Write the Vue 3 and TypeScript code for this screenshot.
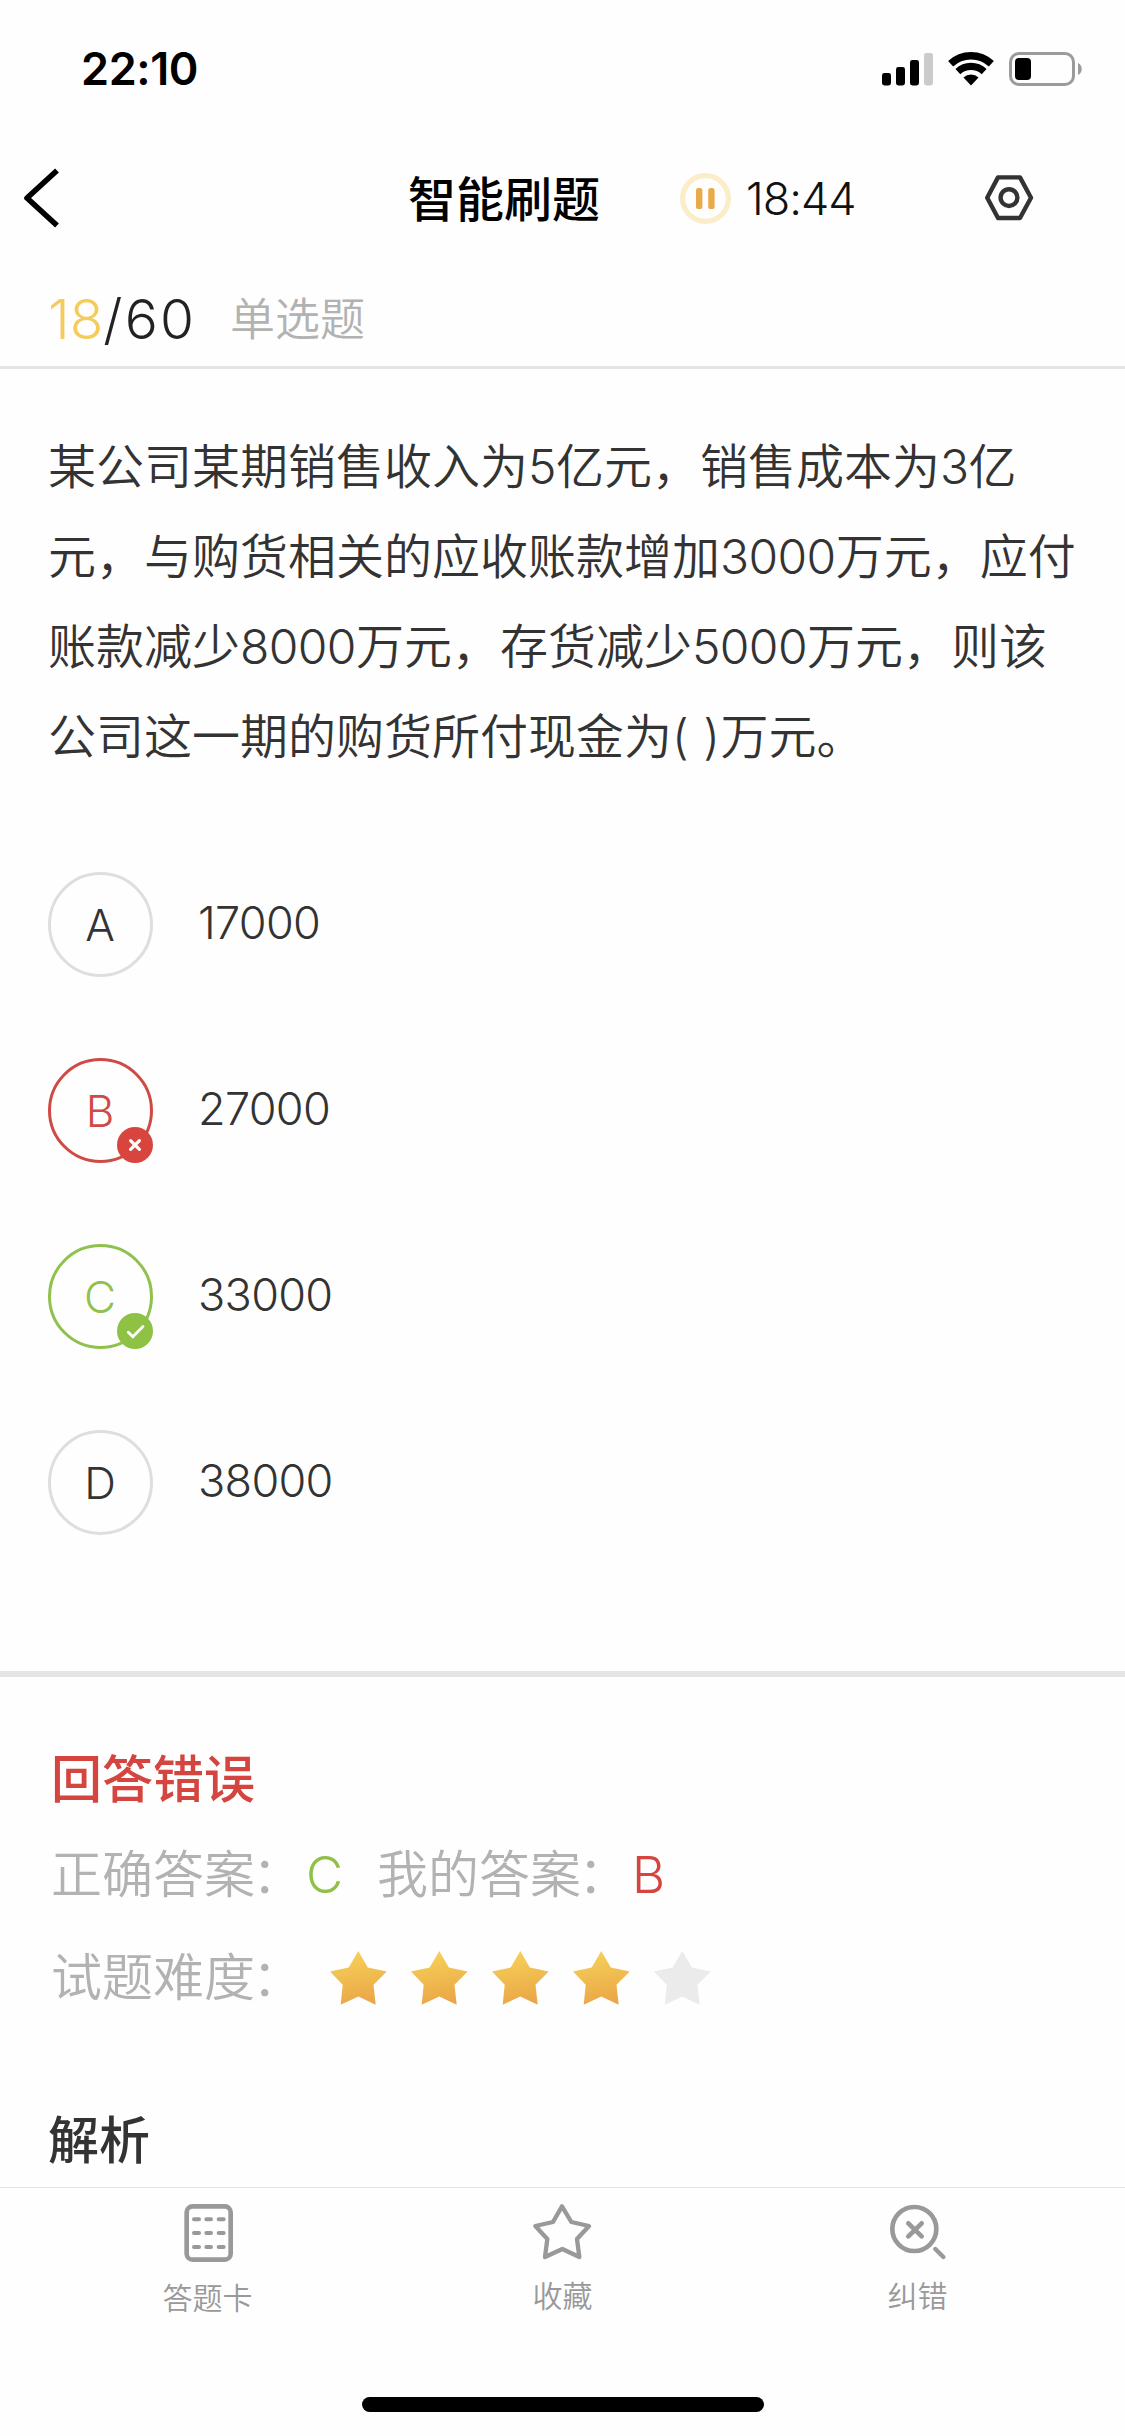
<script setup lang="ts">
interface Option {
  key: string
  text: string
  state: 'plain' | 'wrong' | 'right'
}

const questionLines: string[] = [
  '某公司某期销售收入为5亿元，销售成本为3亿',
  '元，与购货相关的应收账款增加3000万元，应付',
  '账款减少8000万元，存货减少5000万元，则该',
  '公司这一期的购货所付现金为( )万元。',
]

// Split a line so that runs of digits can be spaced separately from the ideographs.
const segments = (line: string): string[] => line.split(/(\d+|\( \))/).filter((s) => s.length > 0)
const isNumber = (s: string): boolean => /^\d+$/.test(s)
const isBlank = (s: string): boolean => s === '( )'

const options: Option[] = [
  { key: 'A', text: '17000', state: 'plain' },
  { key: 'B', text: '27000', state: 'wrong' },
  { key: 'C', text: '33000', state: 'right' },
  { key: 'D', text: '38000', state: 'plain' },
]

const difficulty = 4
const starPoints = '28.3,0 37.8,16.5 56.7,20.4 43.5,33.8 45.7,53.7 28.3,45.4 10.7,53.7 12.7,33.8 0,20.4 18.7,16.5'
</script>

<template>
  <div class="screen" lang="zh-CN">
    <header class="status">
      <span class="clock">22:10</span>
      <div class="indicators">
        <svg class="signal" width="52" height="34" viewBox="0 0 52 34">
          <rect x="0" y="21" width="9" height="12.5" rx="2.4" />
          <rect x="14" y="15" width="9" height="18.5" rx="2.4" />
          <rect x="28" y="8" width="9" height="25.5" rx="2.4" />
          <rect x="42" y="1" width="9" height="32.5" rx="2.4" fill="#cbcbcb" />
        </svg>
        <svg class="wifi" width="46" height="34" viewBox="0 0 45.2 33.4">
          <path d="M2.6 11.6A29.3 29.3 0 0 1 42.6 11.6" fill="none" stroke="#000" stroke-width="7.3" />
          <path d="M9.7 19.2A18.9 18.9 0 0 1 35.5 19.2" fill="none" stroke="#000" stroke-width="7" />
          <path d="M22.6 33L15.2 25.1A10.8 10.8 0 0 1 30 25.1Z" />
        </svg>
        <svg class="battery" width="74" height="34" viewBox="0 0 74 34">
          <rect x="1.5" y="1.5" width="63" height="31" rx="8.5" fill="none" stroke="#9b9b9b" stroke-width="3" />
          <rect x="6" y="6" width="16" height="22" rx="4" />
          <path d="M69 11C74 13 74 21 69 23Z" fill="#9b9b9b" />
        </svg>
      </div>
    </header>

    <nav class="nav">
      <svg class="back" width="38" height="60" viewBox="0 0 38 60">
        <path d="M34 2.5L4 30L34 57.5" fill="none" stroke="#000" stroke-width="5.6" stroke-linejoin="round" />
      </svg>
      <h1 class="title">智能刷题</h1>
      <svg class="pause" width="51" height="51" viewBox="0 0 51 51">
        <circle cx="25.5" cy="25.5" r="22.9" fill="none" stroke="#fbedc9" stroke-width="5.2" />
        <rect x="16" y="15" width="6.4" height="21" rx="2.6" fill="#ebaa4a" />
        <rect x="28.2" y="15" width="6.4" height="21" rx="2.6" fill="#ebaa4a" />
      </svg>
      <span class="timer">18:44</span>
      <svg class="settings" width="50" height="48" viewBox="0 0 50 48">
        <path d="M14 3.4H36L47 23.7L36 44H14L3.2 23.7Z" fill="none" stroke="#333" stroke-width="4.4" stroke-linejoin="round" />
        <circle cx="25" cy="23.6" r="8.4" fill="none" stroke="#333" stroke-width="4.4" />
      </svg>
    </nav>

    <section class="progress">
      <span class="count"><span class="current">18</span><span class="total">/60</span></span>
      <span class="kind">单选题</span>
    </section>

    <main class="question">
      <p class="stem">
        <span v-for="(line, i) in questionLines" :key="i" class="line"><span
          v-for="(s, j) in segments(line)" :key="j" :class="{ num: isNumber(s), blank: isBlank(s) }">{{ s }}</span></span>
      </p>
      <ul class="options">
        <li v-for="o in options" :key="o.key" class="option">
          <span class="bubble" :class="o.state">
            {{ o.key }}
            <svg v-if="o.state === 'wrong'" class="badge" width="36" height="36" viewBox="0 0 36 36">
              <circle cx="18" cy="18" r="18" fill="#d8453f" />
              <path d="M13.6 13.6L22.4 22.4M22.4 13.6L13.6 22.4" stroke="#fff" stroke-width="3.2" stroke-linecap="round" />
            </svg>
            <svg v-if="o.state === 'right'" class="badge" width="36" height="36" viewBox="0 0 36 36">
              <circle cx="18" cy="18" r="18" fill="#8fc145" />
              <path d="M11.3 19.3L15.8 23.8L26 13.6" fill="none" stroke="#fff" stroke-width="2.8" stroke-linecap="round" />
            </svg>
          </span>
          <span class="value">{{ o.text }}</span>
        </li>
      </ul>
    </main>

    <section class="result">
      <h2 class="verdict">回答错误</h2>
      <div class="answers">
        <span class="label">正确答案<span class="colon">：</span></span><span class="good">C</span>
        <span class="label">我的答案<span class="colon">：</span></span><span class="bad">B</span>
      </div>
      <div class="difficulty">
        <span class="label">试题难度<span class="colon">：</span></span>
        <span class="stars">
          <svg v-for="n in 5" :key="n" width="57" height="54" viewBox="0 0 57 54">
            <defs>
              <linearGradient :id="'gold' + n" x1="0.4" y1="0" x2="0.6" y2="1">
                <stop offset="0" stop-color="#f6d15a" />
                <stop offset="1" stop-color="#eaa546" />
              </linearGradient>
            </defs>
            <polygon :points="starPoints" :fill="n <= difficulty ? `url(#gold${n})` : '#ebebeb'" />
          </svg>
        </span>
      </div>
      <h2 class="analysis">解析</h2>
    </section>

    <footer class="tabs">
      <div class="tab card">
        <svg width="50" height="60" viewBox="552 519 150 180">
          <g fill="none" stroke="#999" stroke-linecap="round">
            <rect x="560" y="529" width="132" height="160" rx="18" stroke-width="14" />
            <path d="M582 568H597M619 568H633M656 568H671M582 609H597M619 609H633M656 609H671M582 651H597M619 651H633M656 651H671" stroke-width="12" />
          </g>
        </svg>
        <span>答题卡</span>
      </div>
      <div class="tab favourite">
        <svg width="60" height="58" viewBox="396 130 180 174">
          <path d="M486 140L514 187L567 199L531 238L538 292L487 268L435 292L442 238L406 199L459 187Z" fill="none" stroke="#999" stroke-width="13" stroke-linejoin="round" />
        </svg>
        <span>收藏</span>
      </div>
      <div class="tab report">
        <svg width="58" height="56" viewBox="327 132 174 168">
          <g fill="none" stroke="#999" stroke-linecap="round">
            <circle cx="403" cy="207" r="66" stroke-width="14" />
            <path d="M385 190L425 229M425 190L385 229" stroke-width="14" />
            <path d="M466 267L490 291" stroke-width="13" />
          </g>
        </svg>
        <span>纠错</span>
      </div>
    </footer>
    <div class="home"><i></i></div>
  </div>
</template>

<style>
body {
  background: #fefefe;
}
</style>

<style scoped>
.screen {
  width: 1125px;
  height: 2436px;
  display: flex;
  flex-direction: column;
  overflow: hidden;
  background: #fefefe;
  color: #333;
  font-family: Inter, "Noto Sans CJK SC", sans-serif;
}
.screen > * {
  flex-shrink: 0;
}
h1, h2, p, ul {
  margin: 0;
  padding: 0;
}
svg {
  display: block;
  flex: none;
}
.status {
  height: 132px;
  display: flex;
  justify-content: space-between;
  padding: 0 42px 0 81px;
  box-sizing: border-box;
}
.clock {
  margin-top: 39px;
  height: 60px;
  line-height: 60px;
  font-size: 45px;
  font-weight: 600;
  letter-spacing: -0.4px;
  color: #000;
}
.indicators {
  display: flex;
  margin-top: 52px;
}
.wifi {
  margin-left: 14px;
}
.battery {
  margin-left: 15px;
}
.nav {
  height: 132px;
  display: flex;
  align-items: center;
  padding-left: 23px;
}
.title {
  margin-left: 347px;
  width: 192px;
  padding-top: 3px;
  line-height: 72px;
  font-size: 48px;
  font-weight: 500;
  color: #000;
  white-space: nowrap;
}
.pause {
  margin-left: 80px;
}
.timer {
  margin-left: 15px;
  width: 238px;
  padding-top: 2px;
  line-height: 60px;
  font-size: 45px;
  font-weight: 300;
  letter-spacing: -1px;
  color: #111;
  font-feature-settings: "calt" 0;
}
.progress {
  height: 105px;
  box-sizing: border-box;
  border-bottom: 3px solid #e5e5e5;
  display: flex;
  align-items: center;
  padding: 7px 0 0 48px;
}
.count {
  width: 182px;
  line-height: 80px;
  font-size: 55px;
  font-weight: 300;
  white-space: nowrap;
  font-feature-settings: "calt" 0;
}
.current {
  color: #f5cb5c;
}
.total {
  letter-spacing: 2.2px;
  color: #222;
}
.kind {
  padding-top: 2px;
  line-height: 80px;
  font-size: 45px;
  font-weight: 350;
  color: #b2b2b2;
}
.question {
  height: 1308px;
  box-sizing: border-box;
  padding: 53px 0 0 48px;
  border-bottom: 6px solid #e5e5e5;
}
.line {
  display: block;
  line-height: 90px;
  height: 90px;
  font-size: 48px;
  font-weight: 350;
  white-space: pre;
}
.num {
  letter-spacing: -0.6px;
}
.blank {
  letter-spacing: 0.5px;
}
.stem {
  height: 450px;
}
.options {
  list-style: none;
  display: flex;
  flex-direction: column;
  gap: 81px;
}
.option {
  display: flex;
  height: 105px;
}
.bubble {
  position: relative;
  width: 105px;
  height: 105px;
  box-sizing: border-box;
  border: 3px solid #dedede;
  border-radius: 50%;
  padding-right: 1px;
  text-align: center;
  line-height: 100px;
  font-size: 44px;
  font-weight: 350;
}
.bubble.wrong {
  border-color: #d04a45;
  color: #d04a45;
}
.bubble.right {
  border-color: #8fc14c;
  color: #8fc14c;
}
.badge {
  position: absolute;
  right: -3px;
  bottom: -3px;
}
.value {
  margin-left: 45px;
  line-height: 102px;
  font-size: 45px;
  font-weight: 350;
  letter-spacing: -0.7px;
}
.result {
  height: 510px;
  box-sizing: border-box;
  padding: 67px 0 0 51px;
  font-size: 51px;
}
.verdict {
  line-height: 72px;
  font-size: 51px;
  font-weight: 500;
  color: #d5453f;
}
.answers {
  display: flex;
  margin-top: 23px;
  line-height: 72px;
}
.label {
  width: 255px;
  white-space: nowrap;
  font-weight: 350;
  color: #b2b2b2;
}
.colon {
  margin-left: -3px;
}
.good {
  width: 71px;
  font-weight: 350;
  color: #8fc145;
}
.bad {
  font-weight: 350;
  color: #d5453f;
}
.difficulty {
  display: flex;
  align-items: center;
  margin-top: 31px;
  line-height: 72px;
}
.stars {
  display: flex;
  gap: 24px;
  margin-left: 24px;
}
.analysis {
  margin: 91px 0 0 -3px;
  line-height: 72px;
  font-size: 51px;
  font-weight: 500;
}
.tabs {
  height: 210px;
  box-sizing: border-box;
  border-top: 1px solid #e2e2e2;
  display: flex;
  padding: 0 30px;
  background: #fefefe;
}
.tab {
  flex: 1;
  display: flex;
  flex-direction: column;
  align-items: center;
  line-height: 42px;
  font-size: 30px;
  font-weight: 350;
  color: #999;
}
.tab svg {
  margin: 15px 0 14px 2px;
}
.favourite svg {
  margin-left: -1px;
}
.report svg {
  margin: 16px 0 15px 1px;
}
.home {
  display: flex;
  justify-content: center;
}
.home i {
  width: 402px;
  height: 15px;
  border-radius: 8px;
  background: #000;
}
</style>
